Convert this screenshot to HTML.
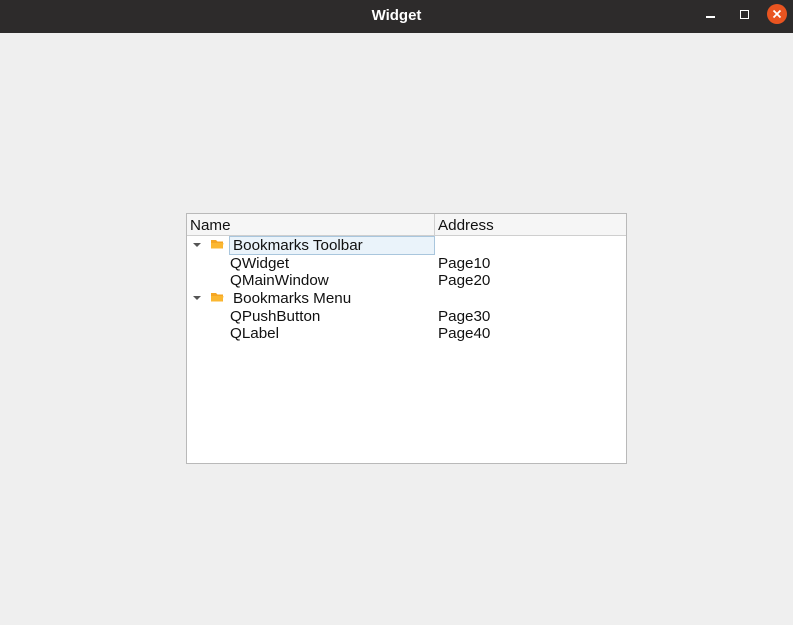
<!DOCTYPE html>
<html><head><style>
body{margin:0;width:793px;height:625px;background:#efefef;font-family:"Liberation Sans",sans-serif;position:relative;overflow:hidden}
.tb{position:absolute;left:0;top:0;width:793px;height:33px;background:#2d2b2b;color:#fff;font-weight:bold;font-size:15px;text-align:center;line-height:31px}
.tree{position:absolute;left:186px;top:213px;width:439px;height:249px;border:1px solid #b9b9b9;background:#fff}
.hd{position:absolute;left:0;top:0;width:439px;height:21px;background:#f6f6f6;border-bottom:1px solid #cfcfcf;font-size:15px;color:#111}
.t{position:absolute;font-size:15.2px;color:#111;white-space:nowrap;line-height:18px}
.arr{position:absolute;width:0;height:0;border-left:4px solid transparent;border-right:4px solid transparent;border-top:4px solid #555}
</style></head><body>
<div class="tb">Widget</div>
<div style="position:absolute;left:706px;top:16px;width:9px;height:1.5px;background:#fff"></div>
<div style="position:absolute;left:740px;top:10px;width:7px;height:7px;border:1.5px solid #fff"></div>
<div style="position:absolute;left:767px;top:4px;width:20px;height:20px;border-radius:50%;background:#e95420"></div>
<svg style="position:absolute;left:767px;top:4px" width="20" height="20"><path d="M6.5 6.5L13.5 13.5M13.5 6.5L6.5 13.5" stroke="#fff" stroke-width="1.8"/></svg>
<div class="tree">
<div class="hd"><span class="t" style="left:3px;top:3px">Name</span><div style="position:absolute;left:247px;top:0;width:1px;height:21px;background:#cfcfcf"></div><span class="t" style="left:251px;top:3px">Address</span></div>
<div style="position:absolute;left:42px;top:22px;width:204px;height:17px;background:#eaf3fa;border:1px solid #a9c6dd"></div>
<div class="arr" style="left:6px;top:29px"></div>
<svg style="position:absolute;left:23px;top:24px" width="15" height="12"><path d="M1 2h5l1.5 1.5H13v7H1z" fill="#f5a623"/><path d="M1 5h12.5l-1 5.5H1z" fill="#fbb731"/></svg>
<span class="t" style="left:46px;top:23px">Bookmarks Toolbar</span>
<span class="t" style="left:43px;top:41px">QWidget</span><span class="t" style="left:251px;top:41px">Page10</span>
<span class="t" style="left:43px;top:58px">QMainWindow</span><span class="t" style="left:251px;top:58px">Page20</span>
<div class="arr" style="left:6px;top:82px"></div>
<svg style="position:absolute;left:23px;top:77px" width="15" height="12"><path d="M1 2h5l1.5 1.5H13v7H1z" fill="#f5a623"/><path d="M1 5h12.5l-1 5.5H1z" fill="#fbb731"/></svg>
<span class="t" style="left:46px;top:76px">Bookmarks Menu</span>
<span class="t" style="left:43px;top:94px">QPushButton</span><span class="t" style="left:251px;top:94px">Page30</span>
<span class="t" style="left:43px;top:111px">QLabel</span><span class="t" style="left:251px;top:111px">Page40</span>
</div>
</body></html>
